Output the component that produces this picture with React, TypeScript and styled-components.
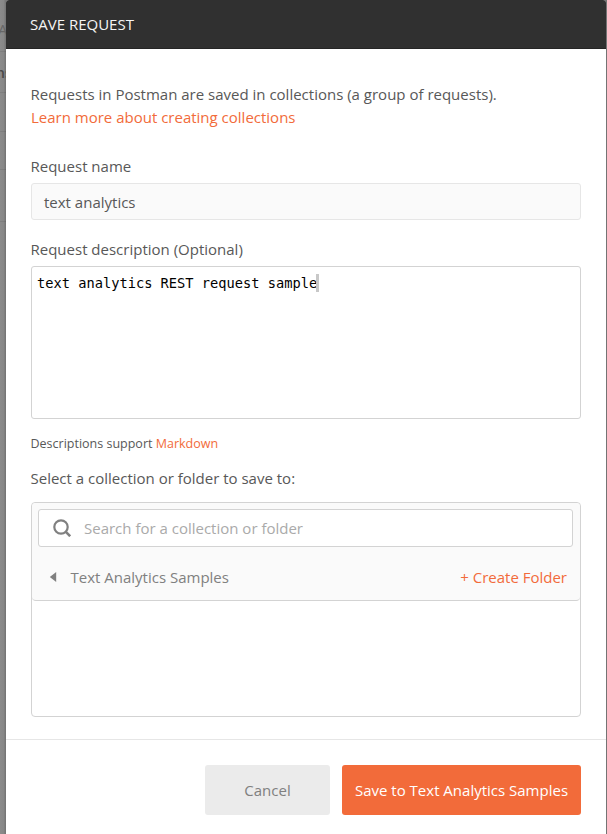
import React from "react";
import styled, { createGlobalStyle } from "styled-components";

const GlobalStyle = createGlobalStyle`
  * { box-sizing: border-box; }
  body {
    margin: 0;
    font-family: "Open Sans", "Noto Sans", sans-serif;
    font-size: 15px;
    color: #585858;
    overflow: hidden;
  }
`;

const Screen = styled.div`
  display: grid;
  grid-template-columns: 6px 600px 1px;
  width: 607px;
  height: 834px;
  background: #747474;
`;

const Backdrop = styled.div`
  display: grid;
  grid-template-rows: 52px 41px 39px 38px 52px 612px;
  overflow: hidden;
  background: linear-gradient(to right, #8b8b8b, #878787 60%, #727272);
`;

const BackdropRow = styled.div`
  border-bottom: 1px solid rgba(0, 0, 0, 0.08);
  overflow: hidden;
  white-space: nowrap;
  line-height: 20px;
`;

const TabHint = styled(BackdropRow)`
  padding-top: 19px;
  font-size: 15px;
  color: #666;
  text-indent: -2px;
`;

const HeadingHint = styled(BackdropRow)`
  padding-top: 11px;
  font-weight: 600;
  font-size: 14px;
  color: #484848;
  text-indent: -4px;
`;

const Modal = styled.section`
  display: flex;
  flex-direction: column;
  background: #fff;
  border-radius: 3px 3px 0 0;
  overflow: hidden;
`;

const Header = styled.header`
  flex: none;
  height: 49px;
  padding-left: 24px;
  background: #303030;
  border-bottom: 1px solid #252525;
  color: #f5f5f5;
  font-size: 15px;
  font-weight: 500;
  line-height: 49px;
`;

const Body = styled.div`
  display: flex;
  flex-direction: column;
  height: 690px;
  padding: 34px 25px 0;
`;

const Paragraph = styled.p`
  margin: 0 0 26px;
  line-height: 23px;
  text-indent: -0.5px;
`;

const Link = styled.a`
  color: #f26b3a;
`;

const Label = styled.label`
  display: block;
  line-height: 23px;
  text-indent: -0.5px;
`;

const NameField = styled.div`
  height: 37px;
  margin: 5px 0 18px;
  padding-left: 12px;
  border: 1px solid #e6e6e6;
  border-radius: 3px;
  background: #fafafa;
  line-height: 37px;
`;

const Editor = styled.div`
  display: flex;
  align-items: flex-start;
  height: 153px;
  margin-top: 5px;
  padding: 7px 5px;
  border: 1px solid #d3d3d3;
  border-radius: 3px;
  color: #000;
  font: 13.7px/18px "DejaVu Sans Mono", monospace;
  white-space: pre;
`;

const Caret = styled.span`
  width: 3px;
  height: 18px;
  margin-left: -1px;
  background: #c8c8c8;
`;

const Note = styled.p`
  margin: 14px 0 12px;
  font-size: 12.5px;
  line-height: 22px;
  text-indent: -0.5px;
`;

const Picker = styled.div`
  height: 215px;
  margin-top: 12px;
  border: 1px solid #d3d3d3;
  border-radius: 4px;
`;

const PickerTop = styled.div`
  height: 98px;
  padding: 6px 7px 0 6px;
  border-bottom: 1px solid #d3d3d3;
  border-radius: 4px;
  background: #fafafa;
`;

const Search = styled.div`
  display: flex;
  align-items: center;
  height: 38px;
  padding-left: 14px;
  gap: 13px;
  border: 1px solid #d3d3d3;
  border-radius: 3px;
  background: #fff;
  color: #aaa;
`;

const Breadcrumb = styled.div`
  display: flex;
  align-items: center;
  height: 60px;
  padding: 0 6px 0 11px;
  color: #808080;
`;

const BackArrow = styled.svg`
  flex: none;
  width: 8px;
  height: 10px;
  margin-right: 13.5px;
`;

const CreateLink = styled(Link)`
  margin-left: auto;
`;

const Footer = styled.footer`
  display: flex;
  flex: 1;
  align-items: flex-start;
  justify-content: flex-end;
  gap: 12px;
  padding: 25px 25px 0;
  border-top: 1px solid #e6e6e6;
`;

const Button = styled.button<{ $primary?: boolean }>`
  width: ${(p) => (p.$primary ? "239px" : "125px")};
  height: 50px;
  padding: 0;
  border: 0;
  border-radius: 3px;
  background: ${(p) => (p.$primary ? "#f26b3a" : "#ebebeb")};
  color: ${(p) => (p.$primary ? "#fff" : "#808080")};
  font: 15px "Open Sans", sans-serif;
  white-space: nowrap;
`;

export default function App() {
  return (
    <>
      <GlobalStyle />
      <Screen>
        <Backdrop>
          <TabHint>A</TabHint>
          <HeadingHint>ns</HeadingHint>
          <BackdropRow />
          <BackdropRow />
          <BackdropRow />
        </Backdrop>
        <Modal>
          <Header>SAVE REQUEST</Header>
          <Body>
            <Paragraph>
              Requests in Postman are saved in collections (a group of requests).
              <br />
              <Link>Learn more about creating collections</Link>
            </Paragraph>
            <Label>Request name</Label>
            <NameField>text analytics</NameField>
            <Label>Request description (Optional)</Label>
            <Editor>
              text analytics REST request sample
              <Caret />
            </Editor>
            <Note>
              Descriptions support <Link>Markdown</Link>
            </Note>
            <Label>Select a collection or folder to save to:</Label>
            <Picker>
              <PickerTop>
                <Search>
                  <svg width="18" height="18" viewBox="0 0 18 18" fill="none" stroke="#808080">
                    <circle cx="8" cy="8" r="6.7" strokeWidth="2.2" />
                    <path d="M12.6 12.6L17.2 17.2" strokeWidth="2.6" />
                  </svg>
                  Search for a collection or folder
                </Search>
                <Breadcrumb>
                  <BackArrow viewBox="0 0 8 10">
                    <path d="M7.2 0L7.2 10L0.8 5Z" fill="#808080" />
                  </BackArrow>
                  Text Analytics Samples
                  <CreateLink>+ Create Folder</CreateLink>
                </Breadcrumb>
              </PickerTop>
            </Picker>
          </Body>
          <Footer>
            <Button>Cancel</Button>
            <Button $primary>Save to Text Analytics Samples</Button>
          </Footer>
        </Modal>
      </Screen>
    </>
  );
}
